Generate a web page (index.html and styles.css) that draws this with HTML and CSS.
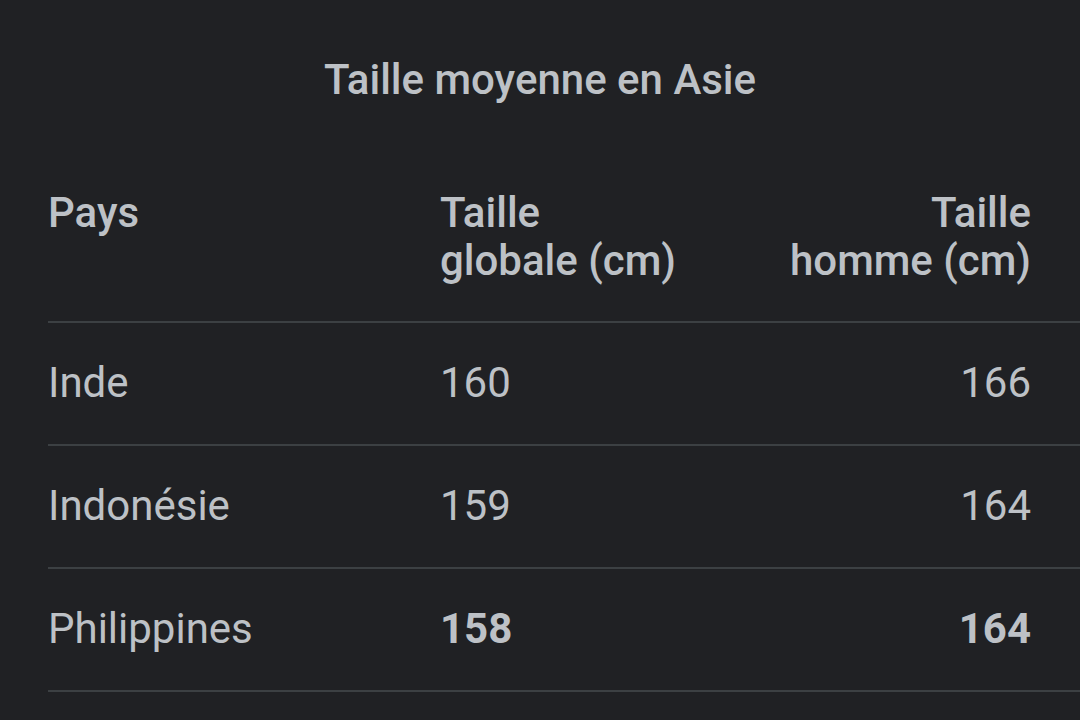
FILE: index.html
```html
<!DOCTYPE html>
<html lang="fr">
<head>
<meta charset="utf-8">
<link rel="stylesheet" href="styles.css">
</head>
<body>
<div class="page">
  <h1 class="title">Taille moyenne en Asie</h1>
  <div class="table-wrap">
    <table class="data">
      <thead>
        <tr>
          <th class="c1">Pays</th>
          <th class="c2">Taille<br>globale (cm)</th>
          <th class="c3">Taille<br>homme (cm)</th>
          <th class="c4"></th>
        </tr>
      </thead>
      <tbody>
        <tr><td class="c1">Inde</td><td class="c2">160</td><td class="c3">166</td><td class="c4"></td></tr>
        <tr><td class="c1">Indonésie</td><td class="c2">159</td><td class="c3">164</td><td class="c4"></td></tr>
        <tr class="hl"><td class="c1">Philippines</td><td class="c2">158</td><td class="c3">164</td><td class="c4"></td></tr>
      </tbody>
    </table>
  </div>
</div>
</body>
</html>
```
FILE: styles.css
```css
html, body {
  margin: 0;
  padding: 0;
  background: #202124;
  overflow: hidden;
}
body {
  width: 1080px;
  height: 720px;
  font-family: Roboto, "Noto Sans", sans-serif;
  color: #bdc1c6;
}
.page {
  padding-top: 56px;
}
.title {
  margin: 0;
  text-align: center;
  font-size: 42px;
  font-weight: 500;
  line-height: 48px;
}
.table-wrap {
  padding-left: 48px;
  margin-top: 84px;
}
.data {
  border-collapse: collapse;
  width: 1200px;
  font-size: 42px;
  line-height: 48px;
  table-layout: fixed;
}
.data th {
  font-weight: 500;
  text-align: left;
  vertical-align: top;
  padding: 1px 0 36px 0;
  border-bottom: 2px solid #3c4043;
  white-space: nowrap;
}
.data td {
  padding: 36px 0 37px 0;
  vertical-align: top;
  border-bottom: 2px solid #3c4043;
  white-space: nowrap;
}
.c1 { width: 392px; }
.c2 { width: 240px; }
.c3 { width: 351px; }
.data .c3 { text-align: right; }
.hl .c2, .hl .c3 { font-weight: 700; }
```
